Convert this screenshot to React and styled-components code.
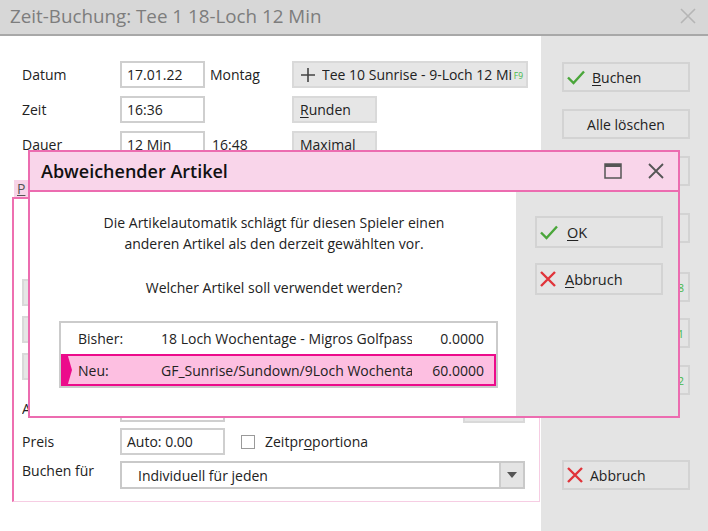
import React from "react";
import styled, { createGlobalStyle, css } from "styled-components";

const Global = createGlobalStyle`
  html, body { margin: 0; padding: 0; background: #fff; }
  body { font-family: "Open Sans", "Noto Sans", sans-serif; font-size: 14px; color: #222; }
  * { box-sizing: border-box; }
`;

const Screen = styled.div`
  position: relative;
  width: 708px;
  height: 531px;
  overflow: hidden;
  display: flex;
  flex-direction: column;
  background: #fff;
`;

const TitleBar = styled.div`
  height: 36px;
  flex: none;
  display: flex;
  align-items: center;
  justify-content: space-between;
  padding: 0 12px 2px 10px;
  background: #d7d7d7;
  border-bottom: 2px solid #a8a8a8;
`;

const TitleText = styled.div`
  font-size: 18.8px;
  color: #7d7d7d;
`;

const Main = styled.div`
  flex: 1;
  display: grid;
  grid-template-columns: 541px 1fr;
  min-height: 0;
`;

const LeftPane = styled.div`
  background: #fff;
  padding: 25px 0 0 12px;
`;

const RightPane = styled.div`
  background: #e4e4e4;
  padding: 26px 18px 0 21px;
  display: flex;
  flex-direction: column;
`;

const FormRows = styled.div`
  display: flex;
  flex-direction: column;
  gap: 8px;
  padding-left: 10px;
`;

const FormRow = styled.div`
  display: grid;
  grid-template-columns: 98px 85px 87px auto;
  align-items: center;
  height: 27px;
`;

const Label = styled.div`
  color: #222;
  white-space: nowrap;
  overflow: hidden;
  align-self: ${(p) => (p.$top ? "start" : "center")};
`;

const Input = styled.div`
  height: ${(p) => p.$h || 27}px;
  width: ${(p) => (p.$w ? `${p.$w}px` : "auto")};
  border: 2px solid #cfcfcf;
  background: #fff;
  padding: 0 5px;
  display: flex;
  align-items: center;
  white-space: nowrap;
  color: #222;
`;

const InlineText = styled.div`
  padding-left: ${(p) => p.$pl || 5}px;
  color: #222;
`;

const GrayButton = styled.div`
  height: ${(p) => p.$h || 27}px;
  width: ${(p) => (p.$w ? `${p.$w}px` : "auto")};
  background: #e6e6e6;
  border: 2px solid #d9d9d9;
  display: flex;
  align-items: center;
  padding: 0 ${(p) => (p.$pr !== undefined ? p.$pr : 6)}px 0 6px;
  gap: 6px;
  white-space: nowrap;
  color: #222;
  ${(p) =>
    p.$center &&
    css`
      justify-content: center;
    `}
`;

const ClipText = styled.span`
  flex: 1;
  min-width: 0;
  overflow: hidden;
  white-space: nowrap;
  margin-right: -4px;
`;

const Hint = styled.span`
  flex: none;
  font-size: 8.5px;
  color: #45b84a;
  padding-top: 2px;
`;

const U = styled.span`
  text-decoration: underline;
  text-underline-offset: 2px;
`;

const SideButton = styled.div`
  width: 128px;
  height: 30px;
  flex: none;
  margin-top: ${(p) => p.$mt || 0}px;
  background: #e4e4e4;
  border: 2px solid #d3d3d3;
  display: flex;
  align-items: center;
  justify-content: ${(p) => (p.$center ? "center" : "flex-start")};
  padding: 0 0 0 ${(p) => (p.$center ? 0 : 2)}px;
  gap: 6px;
  color: #222;
  white-space: nowrap;
`;

const SideHint = styled.span`
  margin-left: auto;
  margin-right: 4px;
  font-size: 11px;
  color: #45b84a;
`;

const Group = styled.div`
  margin-top: 22px;
  width: 528px;
`;

const GroupTab = styled.div`
  width: 18px;
  height: 17px;
  background: #f8d4e8;
  margin-left: 2px;
  padding-left: 3px;
  line-height: 17px;
  color: #555;
  text-decoration: underline;
`;

const GroupBox = styled.div`
  height: 305px;
  border-left: 2px solid #ee6fb0;
  border-top: 2px solid #ee6fb0;
  border-right: 1px solid #f6cde3;
  border-bottom: 1px solid #f6cde3;
  padding: 80px 0 0 8px;
  display: flex;
  flex-direction: column;
`;

const StackButtons = styled.div`
  display: flex;
  flex-direction: column;
  gap: 10px;
`;

const GroupRow = styled.div`
  display: grid;
  grid-template-columns: 98px ${(p) => p.$cols || "auto"};
  align-items: center;
  margin-top: ${(p) => p.$mt || 0}px;
`;

const CheckLabel = styled.div`
  display: flex;
  align-items: center;
  gap: 10px;
  padding-left: 16px;
`;

const CheckBox = styled.div`
  width: 14px;
  height: 14px;
  border: 1.5px solid #9a9a9a;
  background: #fff;
`;

const Select = styled.div`
  width: 405px;
  height: 28px;
  border: 2px solid #c9c9c9;
  background: #fff;
  display: flex;
  align-items: stretch;
`;

const SelectValue = styled.div`
  flex: 1;
  display: flex;
  align-items: center;
  padding-left: 16px;
`;

const SelectArrow = styled.div`
  width: 24px;
  background: #e4e4e4;
  border-left: 2px solid #cdcdcd;
  display: flex;
  align-items: center;
  justify-content: center;
`;

/* ---------- dialog ---------- */

const Dialog = styled.div`
  position: absolute;
  left: 28px;
  top: 150px;
  width: 652px;
  height: 268px;
  border: 2px solid #ec6cb0;
  background: #fff;
  display: flex;
  flex-direction: column;
`;

const DialogTitle = styled.div`
  height: 40px;
  flex: none;
  background: #f9d5ea;
  border-bottom: 2px solid #ec6cb0;
  display: flex;
  align-items: center;
  padding: 0 14px 0 11px;
`;

const DialogTitleText = styled.div`
  flex: 1;
  font-size: 18px;
  font-weight: 600;
  color: #111;
`;

const TitleIcons = styled.div`
  display: flex;
  align-items: center;
  gap: 26px;
`;

const DialogBody = styled.div`
  flex: 1;
  display: grid;
  grid-template-columns: 486px 1fr;
  min-height: 0;
`;

const DialogContent = styled.div`
  background: #fff;
  padding: 20px 0 0 29px;
  display: flex;
  flex-direction: column;
`;

const Message = styled.p`
  margin: 0;
  width: 430px;
  text-align: center;
  line-height: 21px;
  color: #222;
  margin-top: ${(p) => p.$mt || 0}px;
`;

const ListBox = styled.div`
  margin-top: 23px;
  width: 439px;
  border: 2px solid #cbcbcb;
  background: #fff;
  display: flex;
  flex-direction: column;
`;

const ListRow = styled.div`
  position: relative;
  display: grid;
  grid-template-columns: 83px 251px 1fr;
  align-items: center;
  height: ${(p) => (p.$selected ? 32 : 31)}px;
  padding-left: 15px;
  padding-right: 10px;
  white-space: nowrap;
  color: #222;
  border: 2px solid ${(p) => (p.$selected ? "#ec0b8b" : "transparent")};
  background: ${(p) => (p.$selected ? "#fdbfe1" : "#fff")};
`;

const Cell = styled.div`
  overflow: hidden;
  text-align: ${(p) => (p.$right ? "right" : "left")};
`;

const RowMarker = styled.div`
  position: absolute;
  left: 0;
  top: 0;
  bottom: 0;
  width: 9px;
  background: #ec0b8b;
  clip-path: polygon(0 0, 55% 0, 100% 50%, 55% 100%, 0 100%);
`;

const DialogSide = styled.div`
  background: #e4e4e4;
  padding: 24px 0 0 19px;
  display: flex;
  flex-direction: column;
  gap: 15px;
`;

const DialogButton = styled.div`
  width: 128px;
  height: 32px;
  border: 2px solid #d3d3d3;
  background: #e4e4e4;
  display: flex;
  align-items: center;
  gap: 8px;
  padding-left: 2px;
  font-size: 14.5px;
  color: #222;
`;

const Check = () => (
  <svg width="20" height="16" viewBox="0 0 20 16">
    <path d="M2 8.5 L7.5 14 L18 2.5" fill="none" stroke="#4aa63a" strokeWidth="2.4" />
  </svg>
);

const Cross = () => (
  <svg width="18" height="18" viewBox="0 0 18 18">
    <path d="M2 2 L16 16 M16 2 L2 16" fill="none" stroke="#e0343a" strokeWidth="2.4" />
  </svg>
);

const CloseIcon = ({ color = "#555", size = 16, w = 1.8 }) => (
  <svg width={size} height={size} viewBox="0 0 16 16">
    <path d="M1 1 L15 15 M15 1 L1 15" fill="none" stroke={color} strokeWidth={w} />
  </svg>
);

const MaxIcon = () => (
  <svg width="18" height="16" viewBox="0 0 18 16">
    <rect x="1" y="1" width="16" height="14" fill="none" stroke="#555" strokeWidth="1.5" />
    <rect x="1" y="1" width="16" height="3" fill="#555" />
  </svg>
);

const Plus = () => (
  <svg width="16" height="16" viewBox="0 0 16 16">
    <path d="M8 1 V15 M1 8 H15" stroke="#444" strokeWidth="1.6" />
  </svg>
);

const DownArrow = () => (
  <svg width="10" height="6" viewBox="0 0 10 6">
    <path d="M0 0 H10 L5 6 Z" fill="#555" />
  </svg>
);

export default function App() {
  return (
    <Screen>
      <Global />
      <TitleBar>
        <TitleText>Zeit-Buchung: Tee 1 18-Loch 12 Min</TitleText>
        <CloseIcon color="#b5b5b5" size={16} w={1.6} />
      </TitleBar>
      <Main>
        <LeftPane>
          <FormRows>
            <FormRow>
              <Label>Datum</Label>
              <Input>17.01.22</Input>
              <InlineText>Montag</InlineText>
              <GrayButton $w={236} $pr={3}>
                <Plus />
                <ClipText>Tee 10 Sunrise - 9-Loch 12 Min</ClipText>
                <Hint>F9</Hint>
              </GrayButton>
            </FormRow>
            <FormRow>
              <Label>Zeit</Label>
              <Input>16:36</Input>
              <span />
              <GrayButton $w={85}>
                <span>
                  <U>R</U>unden
                </span>
              </GrayButton>
            </FormRow>
            <FormRow>
              <Label>Dauer</Label>
              <Input>12 Min</Input>
              <InlineText $pl={7}>16:48</InlineText>
              <GrayButton $w={85}>Maximal</GrayButton>
            </FormRow>
          </FormRows>

          <Group>
            <GroupTab>P</GroupTab>
            <GroupBox>
              <StackButtons>
                <GrayButton $w={90} $h={27} />
                <GrayButton $w={90} $h={27} />
                <GrayButton $w={90} $h={27} />
              </StackButtons>
              <GroupRow $mt={13} $cols="105px 238px 62px">
                <Label>Artikel</Label>
                <Input $w={105} $h={27} />
                <span />
                <GrayButton $w={62} $h={30} />
              </GroupRow>
              <GroupRow $mt={5} $cols="105px auto">
                <Label>Preis</Label>
                <Input $w={105} $h={27}>
                  Auto: 0.00
                </Input>
                <CheckLabel>
                  <CheckBox />
                  <span>
                    Zeitpr<U>o</U>portiona
                  </span>
                </CheckLabel>
              </GroupRow>
              <GroupRow $mt={6} $cols="auto">
                <Label $top>Buchen für</Label>
                <Select>
                  <SelectValue>Individuell für jeden</SelectValue>
                  <SelectArrow>
                    <DownArrow />
                  </SelectArrow>
                </Select>
              </GroupRow>
            </GroupBox>
          </Group>
        </LeftPane>

        <RightPane>
          <SideButton>
            <Check />
            <span>
              <U>B</U>uchen
            </span>
          </SideButton>
          <SideButton $mt={17} $center>
            Alle löschen
          </SideButton>
          <SideButton $mt={17} />
          <SideButton $mt={27} />
          <SideButton $mt={29}>
            <SideHint>F8</SideHint>
          </SideButton>
          <SideButton $mt={16}>
            <SideHint>F1</SideHint>
          </SideButton>
          <SideButton $mt={17}>
            <SideHint>F2</SideHint>
          </SideButton>
          <SideButton $mt={65}>
            <Cross />
            <span>Abbruch</span>
          </SideButton>
        </RightPane>
      </Main>

      <Dialog>
        <DialogTitle>
          <DialogTitleText>Abweichender Artikel</DialogTitleText>
          <TitleIcons>
            <MaxIcon />
            <CloseIcon />
          </TitleIcons>
        </DialogTitle>
        <DialogBody>
          <DialogContent>
            <Message>
              Die Artikelautomatik schlägt für diesen Spieler einen
              <br />
              anderen Artikel als den derzeit gewählten vor.
            </Message>
            <Message $mt={23}>Welcher Artikel soll verwendet werden?</Message>
            <ListBox>
              <ListRow>
                <Cell>Bisher:</Cell>
                <Cell>18 Loch Wochentage - Migros Golfpass</Cell>
                <Cell $right>0.0000</Cell>
              </ListRow>
              <ListRow $selected>
                <RowMarker />
                <Cell>Neu:</Cell>
                <Cell>GF_Sunrise/Sundown/9Loch Wochentage</Cell>
                <Cell $right>60.0000</Cell>
              </ListRow>
            </ListBox>
          </DialogContent>
          <DialogSide>
            <DialogButton>
              <Check />
              <span>
                <U>O</U>K
              </span>
            </DialogButton>
            <DialogButton>
              <Cross />
              <span>
                <U>A</U>bbruch
              </span>
            </DialogButton>
          </DialogSide>
        </DialogBody>
      </Dialog>
    </Screen>
  );
}
